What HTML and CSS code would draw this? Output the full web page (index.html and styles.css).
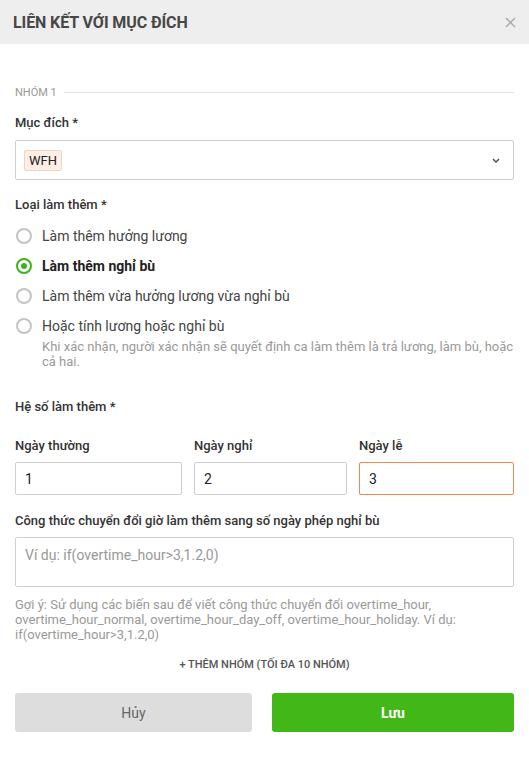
FILE: index.html
```html
<!DOCTYPE html>
<html lang="vi">
<head>
<meta charset="utf-8">
<title>Liên kết với mục đích</title>
<link rel="stylesheet" href="styles.css">
</head>
<body>
<div class="modal">
  <div class="header">
    <h1 class="title">LIÊN KẾT VỚI MỤC ĐÍCH</h1>
    <svg class="close" width="11" height="11" viewBox="0 0 11 11"><path d="M1 1L10 10M10 1L1 10" stroke="#a9a9a9" stroke-width="1.4" fill="none"/></svg>
  </div>
  <div class="body">
    <div class="group-divider"><span>NHÓM 1</span><i></i></div>

    <div class="label first">Mục đích *</div>
    <div class="select">
      <span class="tag">WFH</span>
      <svg class="chev" width="8" height="5" viewBox="0 0 8 5"><path d="M1 1L4 4L7 1" stroke="#555" stroke-width="1.5" fill="none"/></svg>
    </div>

    <div class="label sec">Loại làm thêm *</div>
    <div class="radios">
      <div class="radio"><span class="circle"></span><span class="rtext">Làm thêm hưởng lương</span></div>
      <div class="radio checked"><span class="circle"></span><span class="rtext">Làm thêm nghỉ bù</span></div>
      <div class="radio"><span class="circle"></span><span class="rtext">Làm thêm vừa hưởng lương vừa nghỉ bù</span></div>
      <div class="radio"><span class="circle"></span><span class="rtext">Hoặc tính lương hoặc nghỉ bù</span></div>
      <div class="rhelp">Khi xác nhận, người xác nhận sẽ quyết định ca làm thêm là trả lương, làm bù, hoặc cả hai.</div>
    </div>

    <div class="label coef">Hệ số làm thêm *</div>
    <div class="coef-grid">
      <div class="col"><div class="label">Ngày thường</div><div class="input">1</div></div>
      <div class="col"><div class="label">Ngày nghỉ</div><div class="input">2</div></div>
      <div class="col"><div class="label">Ngày lễ</div><div class="input focus">3</div></div>
    </div>

    <div class="label formula">Công thức chuyển đổi giờ làm thêm sang số ngày phép nghỉ bù</div>
    <div class="textarea">Ví dụ: if(overtime_hour&gt;3,1.2,0)</div>
    <div class="hint">Gợi ý: Sử dụng các biến sau để viết công thức chuyển đổi overtime_hour, overtime_hour_normal, overtime_hour_day_off, overtime_hour_holiday. Ví dụ: if(overtime_hour&gt;3,1.2,0)</div>

    <div class="add-group">+ THÊM NHÓM (TỐI ĐA 10 NHÓM)</div>

    <div class="actions">
      <button class="btn cancel">Hủy</button>
      <button class="btn save">Lưu</button>
    </div>
  </div>
</div>
</body>
</html>
```

FILE: styles.css
```css
* { box-sizing: border-box; }
html, body { margin: 0; padding: 0; background: #fff; }
body { font-family: Roboto, "Noto Sans", "Liberation Sans", sans-serif; color: #333; }

.modal { width: 529px; }

.header {
  height: 44px;
  background: #eeeeee;
  display: flex;
  align-items: center;
  justify-content: space-between;
  padding: 0 13px 0 13px;
}
.title { margin: 0; font-size: 16px; font-weight: 700; color: #474747; letter-spacing: -0.1px; }

.body { padding: 0 15px; }

.group-divider {
  margin-top: 41px;
  height: 14px;
  display: flex;
  align-items: center;
  gap: 7px;
  font-size: 11px;
  color: #999;
}
.group-divider i { flex: 1; height: 1px; background: #e0e0e0; }

.label { font-size: 13px; line-height: 16px; font-weight: 500; color: #333; }
.label.first { margin-top: 16px; }
.label.sec { margin-top: 17px; }

.select {
  margin-top: 9px;
  height: 40px;
  border: 1px solid #cfcfcf;
  border-radius: 2px;
  display: flex;
  align-items: center;
  justify-content: space-between;
  padding: 0 13px 0 8px;
}
.tag {
  font-size: 13px;
  line-height: 17px;
  padding: 1px 4px;
  background: #fdeee6;
  border: 1px solid #f7d3bf;
  border-radius: 2px;
  color: #222;
}
.chev { margin-top: 1px; }

.radios { margin-top: 13px; display: flex; flex-direction: column; }
.radio { display: flex; align-items: center; height: 20px; margin-bottom: 10px; }
.radio:nth-child(4) { margin-bottom: 0; }
.circle {
  width: 16px; height: 16px;
  border: 2px solid #c4c4c4;
  border-radius: 50%;
  margin-left: 1px;
  margin-right: 10px;
  display: flex; align-items: center; justify-content: center;
}
.rtext { font-size: 14px; color: #444; }
.radio.checked .circle { border-color: #3db31a; }
.radio.checked .circle::after { content: ""; width: 6px; height: 6px; background: #3db31a; border-radius: 50%; }
.radio.checked .rtext { font-weight: 700; color: #222; }
.rhelp { margin-top: 3px; margin-right: -4px; padding-left: 27px; font-size: 13px; line-height: 15px; color: #9a9a9a; }

.label.coef { margin-top: 30px; }
.coef-grid { margin-top: 23px; display: grid; grid-template-columns: 167px 153px 155px; column-gap: 12px; }
.input {
  margin-top: 8px;
  height: 33px;
  border: 1px solid #cfcfcf;
  border-radius: 2px;
  display: flex; align-items: center;
  padding-left: 9px;
  font-size: 14px; color: #222;
}
.input.focus { border-color: #f38a4c; }

.label.formula { margin-top: 18px; }
.textarea {
  margin-top: 8px;
  height: 50px;
  border: 1px solid #cfcfcf;
  border-radius: 2px;
  padding: 8px 9px;
  font-size: 14px; line-height: 18px; color: #999;
}
.hint { margin-top: 10px; font-size: 13px; line-height: 15px; color: #9a9a9a; }

.add-group { margin-top: 16px; text-align: center; font-size: 11px; line-height: 14px; font-weight: 500; color: #555; }

.actions { margin-top: 21px; display: grid; grid-template-columns: 237px 242px; column-gap: 20px; }
.btn {
  height: 39px; border: 0; border-radius: 3px;
  font-family: inherit; font-size: 14px;
}
.cancel { background: #dddddd; color: #666; }
.save { background: #42b718; color: #fff; font-weight: 700; }
```
